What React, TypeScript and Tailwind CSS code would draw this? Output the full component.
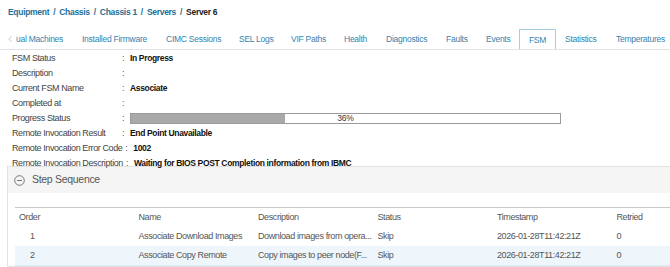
import { ChevronLeft } from "lucide-react";

// tab label + fixed tab width, taken from the reference
const tabs: [string, string][] = [
  ["ual Machines", "w-[73px] pl-[8px]"],
  ["Installed Firmware", "w-[84px] pl-[9px]"],
  ["CIMC Sessions", "w-[73px] pl-[9px]"],
  ["SEL Logs", "w-[52px] pl-[9px]"],
  ["VIF Paths", "w-[53px] pl-[9px]"],
  ["Health", "w-[42px] pl-[9px]"],
  ["Diagnostics", "w-[60px] pl-[9px]"],
  ["Faults", "w-[40px] pl-[9px]"],
  ["Events", "w-[42px] pl-[9px]"],
  ["FSM", "w-[37px] justify-center"],
  ["Statistics", "w-[51px] pl-[9px]"],
  ["Temperatures", "w-[63px] pl-[9px]"],
];

const fields: [string, string | null][] = [
  ["FSM Status", "In Progress"],
  ["Description", ""],
  ["Current FSM Name", "Associate"],
  ["Completed at", ""],
  ["Progress Status", null],
  ["Remote Invocation Result", "End Point Unavailable"],
  ["Remote Invocation Error Code", "1002"],
  ["Remote Invocation Description", "Waiting for BIOS POST Completion information from IBMC"],
];

const steps = [
  ["1", "Associate Download Images", "Download images from opera...", "Skip", "2026-01-28T11:42:21Z", "0"],
  ["2", "Associate Copy Remote", "Copy images to peer node(F...", "Skip", "2026-01-28T11:42:21Z", "0"],
];

function ProgressBar({ pct }: { pct: number }) {
  return (
    <div className="relative h-[11px] w-[431px] border border-[#9a9a9a] bg-white">
      <div className="h-full bg-[#a9a9a9]" style={{ width: `${pct}%` }} />
      <div className="absolute inset-0 flex items-center justify-center text-[8.5px] leading-none tracking-[-0.25px] text-[#333]">
        {pct}%
      </div>
    </div>
  );
}

export default function App() {
  return (
    <div className="h-[267px] w-[670px] overflow-hidden bg-white font-['Liberation_Sans',Arial,sans-serif] tracking-[-0.4px] text-[#333]">
      {/* breadcrumb */}
      <div className="flex h-[24px] items-center gap-[4px] whitespace-nowrap pl-[8px] pt-[1px] text-[8.5px] font-bold tracking-[-0.3px]">
        <span className="text-[#1d6f97]">Equipment</span>
        <span className="text-[#1d6f97]">/</span>
        <span className="text-[#1d6f97]">Chassis</span>
        <span className="text-[#1d6f97]">/</span>
        <span className="text-[#1d6f97]">Chassis 1</span>
        <span className="text-[#1d6f97]">/</span>
        <span className="text-[#1d6f97]">Servers</span>
        <span className="text-[#1d6f97]">/</span>
        <span className="text-[#222]">Server 6</span>
      </div>

      {/* tabs */}
      <div className="mt-[5px] flex h-[21px] items-stretch overflow-hidden whitespace-nowrap border-b border-[#e2e2e2] text-[8.5px] tracking-[-0.25px] text-[#3583ad]">
        {tabs.map(([t, w], i) => (
          <div
            key={t}
            className={
              t === "FSM"
                ? `-mb-px flex shrink-0 items-center border border-b-0 border-[#a6cfe3] bg-white ${w}`
                : `flex shrink-0 items-center ${w}`
            }
          >
            {i === 0 && <ChevronLeft className="-ml-[3px] mr-[1px] h-[10px] w-[10px] text-[#9aa]" strokeWidth={1.5} />}
            {t}
          </div>
        ))}
      </div>

      {/* fsm properties */}
      <div className="pl-[12px] pt-[1px] text-[9px]">
        {fields.map(([label, value]) => (
          <div key={label} className="flex h-[15px] items-center whitespace-nowrap">
            <span className="min-w-[110px] pr-[3px] text-[#444]">{label}</span>
            <span className="w-[8px] text-[#555]">:</span>
            {value === null ? (
              <ProgressBar pct={36} />
            ) : (
              <span className="text-[8.5px] font-bold tracking-[-0.35px] text-[#111]">{value}</span>
            )}
          </div>
        ))}
      </div>

      {/* step sequence */}
      <div className="-mt-[5px] ml-[7px] border border-r-0 border-[#e2e2e2]">
        <div className="flex h-[26px] items-center gap-[7px] bg-[#f5f5f5] pl-[6px] text-[10.5px] tracking-[-0.3px] text-[#555]">
          <svg width="11" height="11" viewBox="0 0 11 11" fill="none" stroke="#777" strokeWidth="1">
            <circle cx="5.5" cy="5.5" r="4.8" />
            <path d="M3 5.5h5" />
          </svg>
          Step Sequence
        </div>
        <div className="pl-[7px] pt-[14px]">
          <table className="w-[680px] table-fixed border-collapse text-left text-[9px] text-[#555]">
            <thead>
              <tr className="h-[19px] border-t border-[#c9c9c9] text-[#555]">
                {["Order", "Name", "Description", "Status", "Timestamp", "Retried"].map((h) => (
                  <th key={h} className="w-[119.5px] pl-[4px] pt-[1px] font-normal">
                    {h}
                  </th>
                ))}
              </tr>
            </thead>
            <tbody>
              {steps.map((r, i) => (
                <tr
                  key={r[0]}
                  className={
                    i % 2 === 1
                      ? "h-[20px] border-b border-[#dbe9f2] bg-[#eef6fb]"
                      : "h-[19px]"
                  }
                >
                  {r.map((c, j) => (
                    <td key={j} className={j === 0 ? "whitespace-nowrap pl-[15px] pt-[1px]" : "whitespace-nowrap pl-[4px] pt-[1px]"}>
                      {c}
                    </td>
                  ))}
                </tr>
              ))}
            </tbody>
          </table>
        </div>
      </div>
    </div>
  );
}
